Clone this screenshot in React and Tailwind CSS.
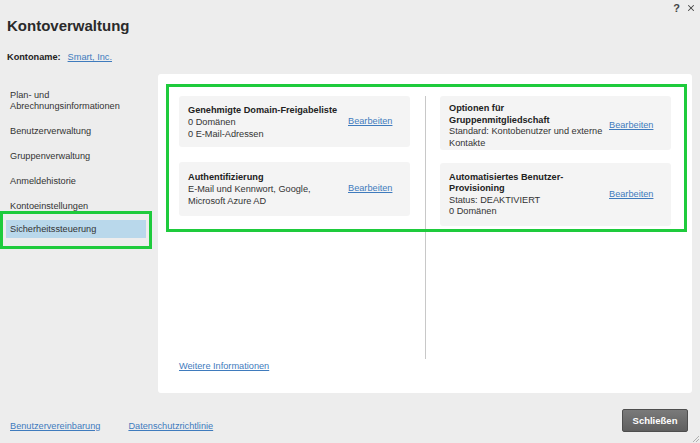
import { X } from 'lucide-react';

const font = { fontFamily: '"Liberation Sans", Arial, sans-serif' };

const Card = ({ title, lines, height, top, lead = 'leading-[12px]' }) => (
  <div className={`bg-[#f4f4f4] rounded-[3px] pl-[9px] flex ${top ? 'items-start pt-[7px]' : 'items-center'} ${height}`}>
    <div className="flex items-center">
      <div className={`w-[160px] ${lead}`}>
        {title.map((t) => (
          <div key={t} className="font-bold text-[#222]">{t}</div>
        ))}
        {lines.map((l) => (
          <div key={l}>{l}</div>
        ))}
      </div>
      <a href="#" className="text-[#3f7bbd] underline">Bearbeiten</a>
    </div>
  </div>
);

const SideItem = ({ children }) => (
  <div className="pl-[10px] leading-[13px] mt-[12px]">{children}</div>
);

export default function App() {
  return (
    <div style={font} className="w-[700px] h-[443px] bg-[#ededed] text-[#333] text-[9.2px] relative overflow-hidden">
      <div className="h-[16px] flex justify-end items-center gap-[6px] pr-[4px] text-[#444]">
        <span className="font-bold text-[11px] leading-none">?</span>
        <X size={10} strokeWidth={2.5} />
      </div>
      <h1 className="pl-[7px] text-[15px] font-bold leading-[20px] text-[#2a2a2a]">Kontoverwaltung</h1>
      <div className="pl-[7px] mt-[15px] leading-[13px] flex gap-[7px]">
        <span className="font-bold text-[#222]">Kontoname:</span>
        <a href="#" className="text-[#3f7bbd] underline">Smart, Inc.</a>
      </div>

      <div className="flex mt-[10px]">
        <div className="w-[158px] pt-[16px]">
          <div className="pl-[10px] leading-[11px]">
            Plan- und<br />Abrechnungsinformationen
          </div>
          <div className="pl-[10px] leading-[13px] mt-[12.5px]">Benutzerverwaltung</div>
          <SideItem>Gruppenverwaltung</SideItem>
          <SideItem>Anmeldehistorie</SideItem>
          <SideItem>Kontoeinstellungen</SideItem>
          <div className="w-[152px] border-[3px] border-[#1ecb3c] pt-[6px] px-[3px] pb-[8px] mt-[-1.5px]">
            <div className="h-[18px] leading-[18px] bg-[#b9d8eb] pl-[4px]">Sicherheitssteuerung</div>
          </div>
        </div>

        <div className="w-[534px] h-[319px] bg-white rounded-[3px] relative pl-[21px] pt-[22px]">
          <div className="flex h-[263px]">
            <div className="w-[231px] flex flex-col gap-[15px]">
              <Card
                title={['Genehmigte Domain-Freigabeliste']}
                lines={['0 Domänen', '0 E-Mail-Adressen']}
                height="h-[51px]"
              />
              <Card
                title={['Authentifizierung']}
                lines={['E-Mail und Kennwort, Google, Microsoft Azure AD']}
                height="h-[54px]"
              />
            </div>
            <div className="w-px bg-[#c8c8c8] ml-[15px] mr-[14px]" />
            <div className="w-[231px] flex flex-col gap-[13px]">
              <Card
                title={['Optionen für', 'Gruppenmitgliedschaft']}
                lines={['Standard: Kontobenutzer und externe Kontakte']}
                height="h-[54px]"
                lead="leading-[11.5px]"
                top
              />
              <Card
                title={['Automatisiertes Benutzer-', 'Provisioning']}
                lines={['Status: DEAKTIVIERT', '0 Domänen']}
                height="h-[63px]"
                lead="leading-[11.5px]"
              />
            </div>
          </div>
          <a href="#" className="inline-block mt-[1px] leading-[13px] text-[#3f7bbd] underline">Weitere Informationen</a>

          <div className="absolute left-[8px] top-[10px] w-[521px] h-[148px] border-[3px] border-[#1ecb3c] pointer-events-none" />
        </div>
      </div>

      <div className="flex justify-between items-start pr-[12px]">
        <div className="pl-[10px] pt-[26.5px] leading-[13px] flex gap-[28px]">
          <a href="#" className="text-[#3f7bbd] underline">Benutzervereinbarung</a>
          <a href="#" className="text-[#3f7bbd] underline">Datenschutzrichtlinie</a>
        </div>
        <button className="mt-[16px] w-[66px] h-[23px] rounded-[2px] border border-[#4e4e4e] bg-gradient-to-b from-[#7a7a7a] to-[#5f5f5f] text-white font-bold text-[9.5px] leading-none">
          Schließen
        </button>
      </div>

      <svg className="absolute right-0 bottom-0" width="9" height="9" viewBox="0 0 9 9">
        <path d="M8 2 L2 8 M8 5 L5 8" stroke="#b0b0b0" strokeWidth="1" />
      </svg>
    </div>
  );
}
